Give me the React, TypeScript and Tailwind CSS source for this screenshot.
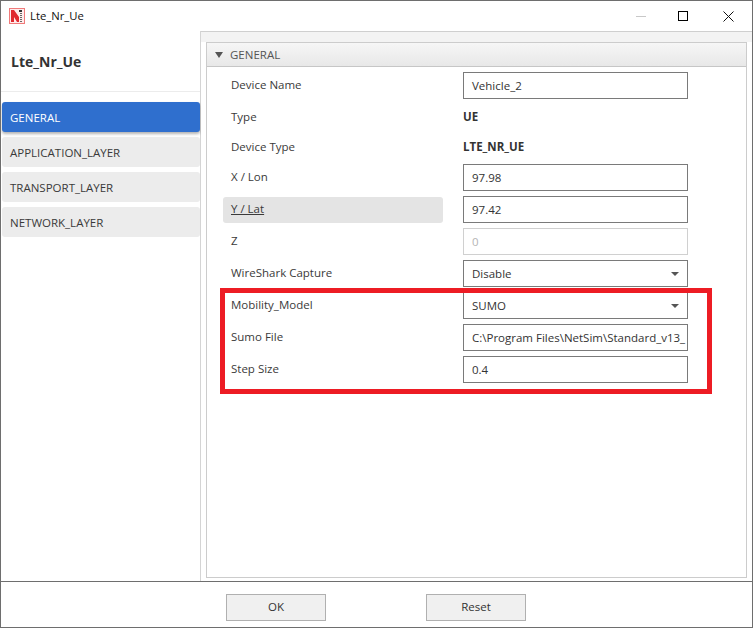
import React from "react";

const font = { fontFamily: '"Open Sans", "Noto Sans", sans-serif' };

const Field = ({ value, disabled }: { value: string; disabled?: boolean }) => (
  <div
    className={`flex h-[27px] w-[225px] items-center overflow-hidden whitespace-nowrap border bg-white pl-[8px] text-[11.5px] ${
      disabled ? "border-[#d0d0d0] text-[#b5b5b5]" : "border-[#7a7a7a] text-[#333333]"
    }`}
  >
    {value}
  </div>
);

const Select = ({ value }: { value: string }) => (
  <div className="flex h-[27px] w-[225px] items-center justify-between border border-[#7a7a7a] bg-white pl-[8px] pr-[8px] text-[11.5px] text-[#333333]">
    <span>{value}</span>
    <span className="h-0 w-0 border-x-[4px] border-t-[4px] border-x-transparent border-t-[#555555]" />
  </div>
);

const Row = ({
  label,
  active,
  children,
}: {
  label: string;
  active?: boolean;
  children: React.ReactNode;
}) => (
  <div className="flex items-center">
    <div
      className={`ml-[15px] flex h-[26px] w-[220px] items-center rounded-[3px] pb-[1px] pl-[8px] text-[11.5px] text-[#3a3a3a] ${
        active ? "bg-[#e4e4e4] underline" : ""
      }`}
    >
      {label}
    </div>
    <div className="ml-[20px]">{children}</div>
  </div>
);

const TextRow = ({ label, value }: { label: string; value: string }) => (
  <div className="flex h-[25px] items-center">
    <div className="ml-[15px] w-[220px] pl-[8px] text-[11.5px] text-[#3a3a3a]">{label}</div>
    <div className="ml-[20px] text-[11.5px] font-bold text-[#333333]">{value}</div>
  </div>
);

const tabs = ["APPLICATION_LAYER", "TRANSPORT_LAYER", "NETWORK_LAYER"];

export default function App() {
  return (
    <div
      className="relative flex h-[628px] w-[753px] flex-col overflow-hidden border border-[#6e6e6e] bg-white"
      style={font}
    >
      {/* title bar */}
      <div className="flex h-[30px] shrink-0 items-center">
        <svg width="16" height="16" viewBox="0 0 16 16" className="ml-[8px]">
          <rect x="0.5" y="0.5" width="15" height="15" fill="#ffecec" stroke="#f07a7a" />
          <path d="M2 2h3l5 7v5H8L5 9v5H2z" fill="#e0282e" />
          <rect x="10" y="2" width="3" height="2" fill="#333333" />
          <path d="M11 5h2v1h-2zM11 7h2v1h-2zM11 9h2v1h-2zM11 11h2v1h-2zM11 13h2v1h-2z" fill="#666666" />
        </svg>
        <span className="ml-[5px] text-[11.3px] text-[#111111]">Lte_Nr_Ue</span>
        <div className="ml-auto flex items-center">
          <span className="mr-[32px] h-px w-[10px] bg-[#c8c8c8]" />
          <span className="mr-[35px] h-[10px] w-[10px] border border-black" />
          <svg width="11" height="11" viewBox="0 0 11 11" className="mr-[18px]">
            <path d="M0.5 0.5l10 10M10.5 0.5l-10 10" stroke="#111" strokeWidth="1" fill="none" />
          </svg>
        </div>
      </div>

      <div className="flex min-h-0 flex-1">
        {/* left column */}
        <div className="flex w-[200px] shrink-0 flex-col border-r border-[#d4d4d4]">
          <div className="flex h-[61px] shrink-0 items-center border-b border-[#ececec] pl-[10px] text-[14px] font-bold text-[#333333]">
            Lte_Nr_Ue
          </div>
          <div className="flex flex-col gap-[5px] pl-[1px] pt-[10px]">
            <div className="flex h-[30px] w-[198px] items-center rounded-[3px] bg-[#2f6fce] pl-[8px] pt-[1px] text-[11.5px] text-white shadow-[0_2px_3px_rgba(0,0,0,0.3)]">
              GENERAL
            </div>
            {tabs.map((t) => (
              <div
                key={t}
                className="flex h-[30px] w-[198px] items-center rounded-[3px] bg-[#ececec] pl-[8px] pt-[1px] text-[11.5px] text-[#3a3a3a]"
              >
                {t}
              </div>
            ))}
          </div>
        </div>

        {/* right panel */}
        <div className="flex min-w-0 flex-1 flex-col border-t border-[#cfcfcf] bg-white">
          <div className="h-[10px] shrink-0 bg-[#f3f3f3]" />
          <div className="mb-[3px] ml-[5px] mr-[5px] flex flex-1 flex-col border border-[#cccccc]">
            <div className="flex h-[24px] shrink-0 items-center border-b border-[#c6c6c6] bg-gradient-to-b from-[#f6f6f6] to-[#e8e8e8] pl-[8px] text-[11.5px] text-[#555555]">
              <span className="h-0 w-0 border-x-[4px] border-t-[6px] border-x-transparent border-t-[#555555]" />
              <span className="ml-[7px]">GENERAL</span>
            </div>
            <div className="flex flex-col gap-[5px] pl-[1px] pt-[5px]">
              <Row label="Device Name">
                <Field value="Vehicle_2" />
              </Row>
              <TextRow label="Type" value="UE" />
              <TextRow label="Device Type" value="LTE_NR_UE" />
              <Row label="X / Lon">
                <Field value="97.98" />
              </Row>
              <Row label="Y / Lat" active>
                <Field value="97.42" />
              </Row>
              <Row label="Z">
                <Field value="0" disabled />
              </Row>
              <Row label="WireShark Capture">
                <Select value="Disable" />
              </Row>
              <Row label="Mobility_Model">
                <Select value="SUMO" />
              </Row>
              <Row label="Sumo File">
                <Field value="C:\Program Files\NetSim\Standard_v13_" />
              </Row>
              <Row label="Step Size">
                <Field value="0.4" />
              </Row>
            </div>
          </div>
        </div>
      </div>

      {/* footer */}
      <div className="flex h-[46px] shrink-0 items-center border-t border-[#6e6e6e] pl-[225px] pt-[5px]">
        <button className="h-[27px] w-[100px] border border-[#b0b0b0] bg-[#f0f0f0] text-[11.5px] text-[#333333]">
          OK
        </button>
        <button className="ml-[100px] h-[27px] w-[100px] border border-[#b0b0b0] bg-[#f0f0f0] text-[11.5px] text-[#333333]">
          Reset
        </button>
      </div>

      {/* red annotation */}
      <div className="pointer-events-none absolute left-[219px] top-[287px] h-[106px] w-[492px] border-[5px] border-[#ed1c24]" />
    </div>
  );
}
